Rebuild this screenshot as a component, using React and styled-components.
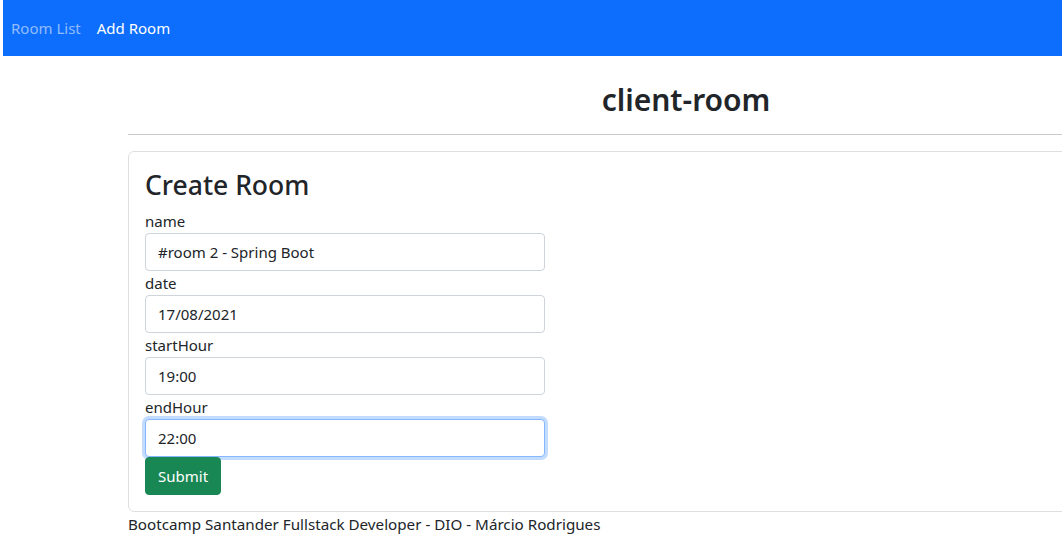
import styled, { createGlobalStyle } from "styled-components";

const GlobalStyle = createGlobalStyle`
  * { box-sizing: border-box; }
  html, body { margin: 0; padding: 0; background: #fff; overflow: hidden; }
  body {
    font-family: "Noto Sans", "Open Sans", sans-serif;
    font-size: 16px;
    line-height: 1.5;
    color: #212529;
  }
`;

const fields = [
  { label: "name", value: "#room 2 - Spring Boot" },
  { label: "date", value: "17/08/2021" },
  { label: "startHour", value: "19:00" },
  { label: "endHour", value: "22:00", focused: true },
];

const App = () => {
  return (
    <Page>
      <GlobalStyle />
      <Navbar>
        <NavLink active={false}>Room List</NavLink>
        <NavLink active>Add Room</NavLink>
      </Navbar>

      <Container>
        <Title>client-room</Title>
        <Rule />

        <Card>
          <CardTitle>Create Room</CardTitle>
          {fields.map((f) => (
            <Field key={f.label}>
              <Label>{f.label}</Label>
              <Input defaultValue={f.value} focused={f.focused} readOnly />
            </Field>
          ))}
          <SubmitButton>Submit</SubmitButton>
        </Card>

        <Footer>Bootcamp Santander Fullstack Developer - DIO - Márcio Rodrigues</Footer>
      </Container>
    </Page>
  );
};

const Page = styled.div`
  width: 1062px;
  height: 537px;
  overflow: hidden;
`;

const Navbar = styled.nav`
  display: flex;
  align-items: center;
  gap: 16px;
  height: 56px;
  margin-left: 3px;
  padding-left: 8px;
  background: #0d6efd;
`;

const NavLink = styled.a`
  color: ${(props) => (props.active ? "#fff" : "rgba(255, 255, 255, 0.55)")};
  font-size: 15px;
  cursor: pointer;
`;

const Container = styled.div`
  width: 1116px;
  margin-left: 128px;
`;

const Title = styled.h2`
  margin: 0;
  padding-top: 26px;
  text-align: center;
  font-size: 30px;
  font-weight: 600;
  line-height: 36px;
`;

const Rule = styled.hr`
  margin: 16px 0 16px;
  border: 0;
  border-top: 1px solid #c8c8c8;
`;

const Card = styled.div`
  display: flex;
  flex-direction: column;
  align-items: flex-start;
  padding: 16px;
  border: 1px solid rgba(0, 0, 0, 0.125);
  border-radius: 6px;
`;

const CardTitle = styled.h3`
  margin: 0 0 7px;
  font-size: 26.5px;
  font-weight: 500;
  line-height: 34px;
`;

const Field = styled.div`
  display: flex;
  flex-direction: column;
`;

const Label = styled.label`
  font-size: 15px;
  line-height: 24px;
`;

const Input = styled.input`
  width: 400px;
  height: 38px;
  padding: 6px 12px;
  font-family: inherit;
  font-size: 15px;
  color: #212529;
  border: 1px solid ${(props) => (props.focused ? "#86b7fe" : "#ced4da")};
  border-radius: 4px;
  outline: none;
  box-shadow: ${(props) => (props.focused ? "0 0 0 3px rgba(13, 110, 253, 0.25)" : "none")};
`;

const SubmitButton = styled.button`
  height: 38px;
  padding: 6px 12px;
  font-family: inherit;
  font-size: 15px;
  color: #fff;
  background: #198754;
  border: 1px solid #198754;
  border-radius: 4px;
  cursor: pointer;
`;

const Footer = styled.div`
  padding-top: 1px;
  font-size: 15.2px;
`;

export default App;
